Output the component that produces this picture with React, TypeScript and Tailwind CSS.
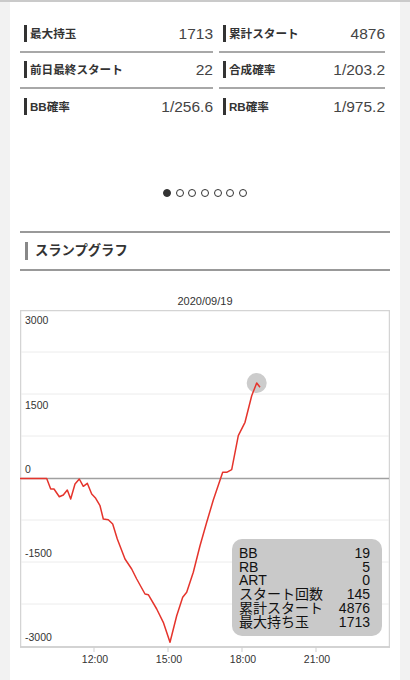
import React from "react";

const FONT = { fontFamily: "'Liberation Sans', 'Noto Sans CJK JP', sans-serif" };

const stats: [string, string][] = [
  ["最大持玉", "1713"],
  ["累計スタート", "4876"],
  ["前日最終スタート", "22"],
  ["合成確率", "1/203.2"],
  ["BB確率", "1/256.6"],
  ["RB確率", "1/975.2"],
];

const pts: [number, number][] = [
  [20, 479.5], [46.7, 479.5], [50.7, 490], [54, 490], [59.3, 497.7], [63.3, 496], [67.3, 491],
  [70.7, 500], [75, 485], [79.3, 480], [83.3, 487.3], [87.3, 484.3], [91.7, 495], [95.7, 499.3],
  [100, 506.7], [103.3, 520], [108.3, 520.7], [112.7, 525], [117.3, 540], [125, 560], [131.7, 570],
  [136.7, 580], [145, 595], [148.3, 595.7], [156.7, 610], [163.3, 623.3], [170, 643.3], [176.7, 616.7],
  [182.7, 598.3], [186.7, 593.3], [193.3, 573.3], [200, 546.7], [206.7, 523.3], [213.3, 501],
  [222.7, 473.3], [226.7, 473.3], [231.7, 470.7], [238.3, 436.7], [245, 423.3], [251.7, 396.7],
  [256.7, 384], [260, 388.3],
];

const legend: [string, string][] = [
  ["BB", "19"],
  ["RB", "5"],
  ["ART", "0"],
  ["スタート回数", "145"],
  ["累計スタート", "4876"],
  ["最大持ち玉", "1713"],
];

function Chart() {
  const grid = [353, 395, 437, 521, 563, 605];
  const yLabels: [string, number][] = [
    ["3000", 325],
    ["1500", 410],
    ["0", 474],
    ["-1500", 558],
    ["-3000", 642],
  ];
  const xTicks: [string, number][] = [
    ["12:00", 94],
    ["15:00", 168],
    ["18:00", 242],
    ["21:00", 316],
  ];
  return (
    <div className="relative mt-[2px] h-[369px] w-[370px]">
      <svg width="370" height="369" viewBox="0 0 370 369" className="block">
        <g transform="translate(-20,-311)" style={FONT}>
          <rect x="20.5" y="311.5" width="369" height="336.5" fill="#fff" stroke="#d4d4d4" strokeWidth="1.5" />
          {grid.map((y) => (
            <line key={y} x1="21" x2="389" y1={y} y2={y} stroke="#ececec" strokeWidth="1" />
          ))}
          <line x1="21" x2="389" y1="479.5" y2="479.5" stroke="#a0a0a0" strokeWidth="1.5" />
          <line x1="20" x2="390" y1="648" y2="648" stroke="#cfcfcf" strokeWidth="1.5" />
          {xTicks.map(([t, x]) => (
            <g key={t}>
              <line x1={x} x2={x} y1="648" y2="653" stroke="#cfcfcf" strokeWidth="1" />
              <text x={x + 1} y="664" fontSize="10.5" fill="#333" textAnchor="middle">
                {t}
              </text>
            </g>
          ))}
          {yLabels.map(([t, y]) => (
            <text key={t} x="25" y={y} fontSize="10.5" fill="#333">
              {t}
            </text>
          ))}
          <circle cx="256.7" cy="384" r="10" fill="#cccccc" />
          <polyline
            points={pts.map((p) => p.join(",")).join(" ")}
            fill="none"
            stroke="#e5342c"
            strokeWidth="1.5"
            strokeLinejoin="round"
          />
        </g>
      </svg>
      <div
        className="absolute left-[212px] top-[229px] flex h-[97px] w-[150px] flex-col rounded-[10px] bg-[#c9c9c9] pl-[7px] pr-[12px] pt-[8px] text-[14px] leading-[13.7px] text-[#111]"
        style={FONT}
      >
        {legend.map(([k, v]) => (
          <div key={k} className="flex justify-between">
            <span>{k}</span>
            <span>{v}</span>
          </div>
        ))}
      </div>
    </div>
  );
}

export default function App() {
  return (
    <div className="h-[680px] w-[410px] overflow-hidden bg-[#f2f2f2]" style={FONT}>
      <div className="h-[2px] bg-[#cacaca]" />
      <div className="ml-[10px] h-[678px] w-[390px] bg-white px-[10px] pt-[15px]">
        <div className="grid grid-cols-[193px_166px] gap-x-[6px]">
          {stats.map(([label, value], i) => (
            <div
              key={label}
              className={`flex h-[36px] items-center justify-between pl-[4px] ${i < 4 ? "border-b-2 border-[#a8a8a8]" : ""}`}
            >
              <div className="flex items-center">
                <div className="mr-[3px] h-[17px] w-[3px] bg-[#333]" />
                <span className="text-[11.6px] font-bold text-[#333]">{label}</span>
              </div>
              <span className="text-[15.5px] text-[#444]">{value}</span>
            </div>
          ))}
        </div>

        <div className="mt-[64px] flex justify-center gap-[4.67px]">
          {[0, 1, 2, 3, 4, 5, 6].map((i) => (
            <div
              key={i}
              className={`h-[8px] w-[8px] rounded-full border border-[#333] ${i === 0 ? "bg-[#333]" : "bg-white"}`}
            />
          ))}
        </div>

        <div className="mt-[34px] flex h-[40px] items-center border-y-2 border-[#999] pl-[5px]">
          <div className="h-[18px] w-[3px] bg-[#888]" />
          <span className="ml-[7px] text-[13.3px] font-bold text-[#333]">スランプグラフ</span>
        </div>

        <div className="mt-[23px] h-[14px] text-center text-[11px] leading-[14px] text-[#333]">2020/09/19</div>

        <Chart />
      </div>
    </div>
  );
}
